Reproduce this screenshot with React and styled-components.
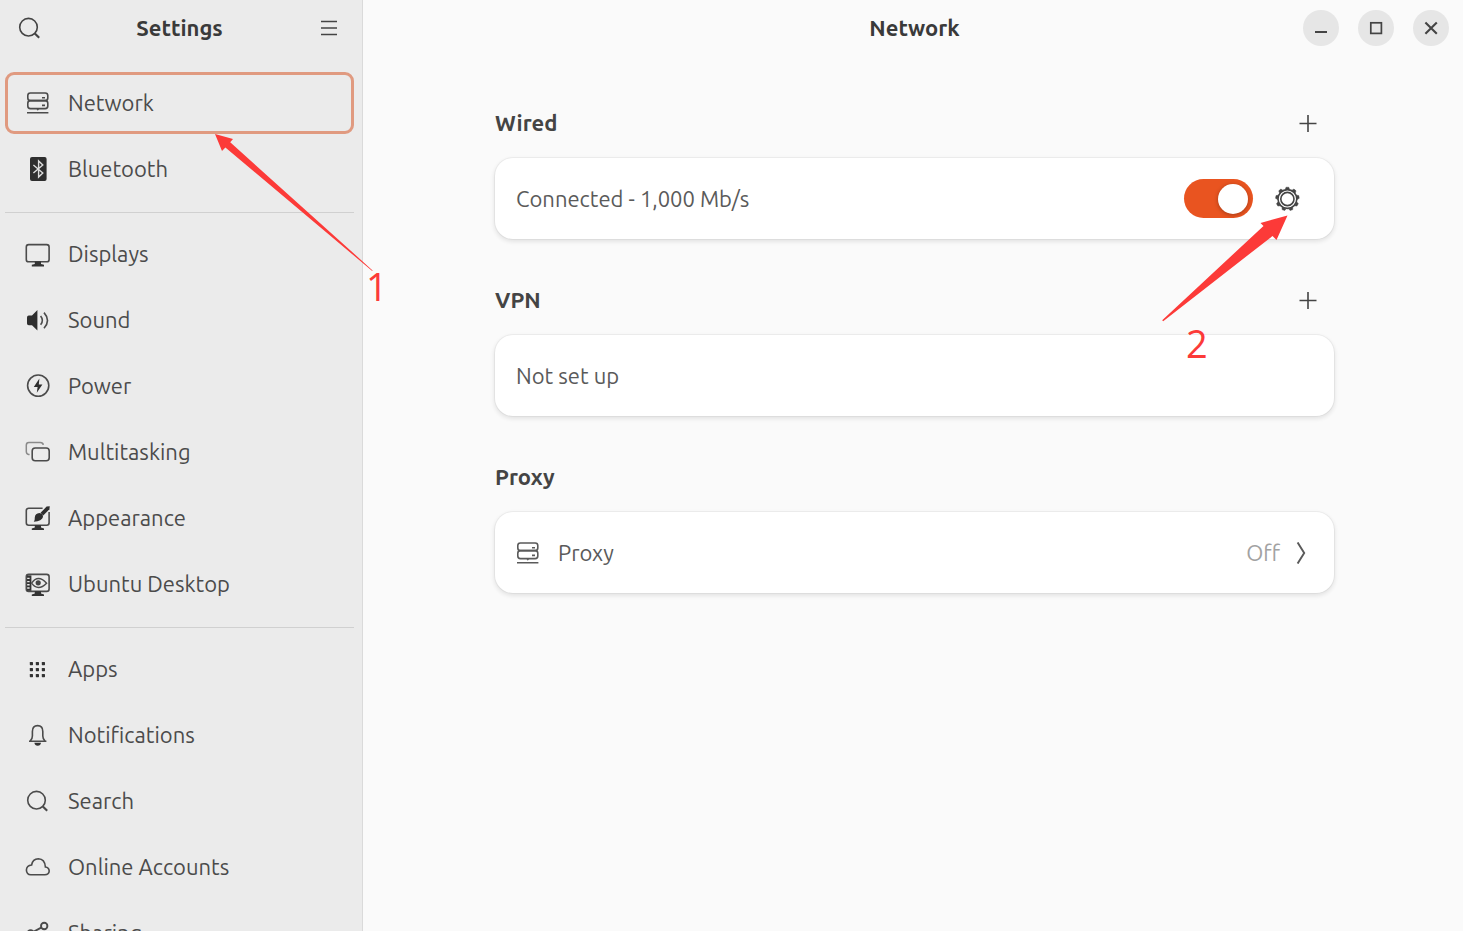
import React from "react";
import styled, { createGlobalStyle, css } from "styled-components";

const GlobalStyle = createGlobalStyle`
  *, *::before, *::after { box-sizing: border-box; }
  body {
    margin: 0;
    background: #fafafa;
    color: #4b4b4b;
    font-family: Ubuntu, "Noto Sans", sans-serif;
    font-size: 22px;
    line-height: 30px;
  }
  button, input { font: inherit; color: inherit; }
`;

const Window = styled.div`
  position: relative;
  display: flex;
  height: 100vh;
  overflow: hidden;
`;

/* ---------- sidebar ---------- */

const Sidebar = styled.aside`
  flex: none;
  width: 363px;
  padding: 0 8px 0 5px;
  background: #ebebeb;
  border-right: 1px solid #dadada;
  overflow: hidden;
`;

const SidebarHeader = styled.header`
  display: flex;
  align-items: center;
  justify-content: space-between;
  height: 55px;
  margin-bottom: 17px;
`;

const Title = styled.h1`
  margin: 0;
  color: #3a3a3a;
  font-size: 22px;
  font-weight: 700;
`;

const IconButton = styled.button`
  display: grid;
  place-items: center;
  flex: none;
  width: ${(p) => p.$size || 50}px;
  height: ${(p) => p.$size || 50}px;
  padding: 0;
  border: 0;
  border-radius: 8px;
  background: none;
  color: #444;
`;

const NavGroup = styled.ul`
  display: flex;
  flex-direction: column;
  gap: 4px;
  margin: 0;
  padding: 0;
  list-style: none;

  & + & {
    margin-top: 12px;
    padding-top: 10px;
    border-top: 1px solid #d0d0d0;
  }
`;

const NavLink = styled.a`
  display: flex;
  align-items: center;
  gap: 17px;
  height: 62px;
  padding: 0 17px;
  border: 3px solid transparent;
  border-radius: 9px;
  color: inherit;
  text-decoration: none;
  ${(p) => p.$current && css`border-color: #e09a80;`}
`;

/* ---------- main panel ---------- */

const Main = styled.main`
  flex: 1;
  min-width: 0;
  padding-left: 3px;
`;

const MainHeader = styled.header`
  display: grid;
  grid-template-columns: 1fr auto 1fr;
  align-items: center;
  height: 55px;
  padding: 0 14px;
`;

const WindowControls = styled.div`
  grid-column: 3;
  display: flex;
  justify-content: flex-end;
  gap: 19px;
`;

const RoundButton = styled.button`
  display: grid;
  place-items: center;
  width: 36px;
  height: 36px;
  padding: 0;
  border: 0;
  border-radius: 50%;
  background: #e6e6e6;
  color: #444;
`;

const PanelTitle = styled(Title)`
  grid-column: 2;
`;

const Content = styled.div`
  display: flex;
  flex-direction: column;
  gap: 44px;
  max-width: 839px;
  margin: 0 auto;
  padding-top: 51px;
`;

const SectionHeader = styled.div`
  display: flex;
  align-items: center;
  justify-content: space-between;
  height: 34px;
  margin-bottom: 18px;
  padding: 0 8px 0 0;
`;

const SectionTitle = styled.h2`
  margin: 0;
  color: #444;
  font-size: 22px;
  font-weight: 700;
`;

const Card = styled.div`
  position: relative;
  display: flex;
  align-items: center;
  height: 81px;
  padding: 0 22px 0 21px;
  border-radius: 18px;
  background: #fff;
  box-shadow: 0 0 0 1px rgba(0, 0, 0, 0.04), 0 2px 4px 1px rgba(0, 0, 0, 0.09);
  color: #5a5a5a;
`;

const RowText = styled.span`
  flex: 1;
`;

const ProxyLink = styled.a`
  display: flex;
  flex: 1;
  align-items: center;
  gap: 17px;
  margin-left: -1px;
  color: inherit;
  text-decoration: none;
`;

const RowValue = styled.span`
  margin-right: -7px;
  color: #a2a2a2;
`;

const Switch = styled.input.attrs({ type: "checkbox", role: "switch" })`
  appearance: none;
  flex: none;
  display: flex;
  align-items: center;
  width: 69px;
  height: 39px;
  margin: 0 9px 0 0;
  padding: 0 5px;
  border-radius: 20px;
  background: #c9c9c9;

  &::before {
    content: "";
    width: 30px;
    height: 30px;
    border-radius: 50%;
    background: #fff;
    box-shadow: 0 1px 4px rgba(0, 0, 0, 0.3);
  }

  &:checked {
    justify-content: flex-end;
    background: #e95420;
  }
`;

/* ---------- callouts ---------- */

const Callout = styled.div`
  position: absolute;
  z-index: 1;
  pointer-events: none;
  color: #fc3a38;
  font: 38px/44px "Open Sans", sans-serif;

  svg { display: block; }
  span { position: absolute; }
`;

const NavCallout = styled(Callout)`
  top: 133px;
  left: 214px;

  span { top: 131px; left: 152px; }
`;

const GearCallout = styled(Callout)`
  top: 57px;
  right: 45px;

  span { top: 106px; left: 25px; }
`;

/* ---------- icons ---------- */

function Glyph({ size = 26, children }) {
  return (
    <svg width={size} height={size} viewBox={`0 0 ${size} ${size}`} fill="none" stroke="currentColor" strokeWidth="1.6" aria-hidden="true">
      {children}
    </svg>
  );
}

const Stand = ({ y }) => (
  <path d={`M9.8 ${y}h6.2v2.4l3 .8v1.6H6.8v-1.6l3-.8z`} fill="#333" stroke="none" />
);

const SearchShape = () => (
  <>
    <circle cx="11.5" cy="12.2" r="8.8" />
    <path d="M17.8 18.5l4.4 4.2" strokeWidth="2.2" />
  </>
);

const icons = {
  network: (
    <>
      <rect x="2.8" y="3" width="20" height="7.6" rx="2.6" />
      <rect x="2.8" y="10.6" width="20" height="8" rx="2.6" />
      <path d="M17 7.8h3M17 15.4h3M2 22.8h21.4" />
      <path d="M11.2 18.6h3.2l-1.6 2.2z" fill="currentColor" stroke="none" />
    </>
  ),
  bluetooth: (
    <>
      <rect x="5" y="1" width="16.6" height="24" rx="2" fill="#2e2e2e" stroke="none" />
      <path d="M8.4 9l9.4 8-4.2 4V5l4.2 4-9.4 8" stroke="#dcdcdc" strokeWidth="1.4" />
    </>
  ),
  displays: (
    <>
      <rect x="1.3" y="3.6" width="22.8" height="17.2" rx="2.4" />
      <Stand y={20.6} />
    </>
  ),
  sound: (
    <>
      <path d="M2 10.4q0-1.8 1.8-1.8H7L12.4 3v20.6L7 18.2H3.8Q2 18.2 2 16.4z" fill="#2e2e2e" stroke="none" />
      <path d="M15.6 9q3.6 4.4 0 8.8" />
      <path d="M19 5.6q7 7.8 0 15.6" />
    </>
  ),
  power: (
    <>
      <circle cx="13.2" cy="12.6" r="10.6" />
      <path d="M14.4 5.6L8.8 14h3.8l-.8 5.8 5.6-8.4h-3.6z" fill="#2e2e2e" stroke="none" />
    </>
  ),
  multitasking: (
    <>
      <path d="M4.6 15.4H3.6Q1.3 15 1.3 12.6V6.2q0-2.6 2.6-2.6h11.4q2.6 0 3 2.2" stroke="#8a8a8a" strokeWidth="1.5" />
      <rect x="7.2" y="9" width="17" height="12.8" rx="3" />
    </>
  ),
  appearance: (
    <>
      <path d="M17.6 3.2H3.7q-2.4 0-2.4 2.4v12.2q0 2.4 2.4 2.4h18q2.4 0 2.4-2.4V7" />
      <path d="M24.8 1.2L21.6 1.6l-6 6.2 2.6 2.6 6.2-6.2z" fill="#2e2e2e" stroke="none" />
      <path d="M14.4 8q3.8.4 3.6 4-1 4.2-9.2 4.8 1.2-1.8 1-4.6.4-3.8 4.6-4.2z" fill="#2e2e2e" stroke="none" />
      <Stand y={20.2} />
    </>
  ),
  desktop: (
    <>
      <rect x="1.3" y="3.4" width="22.8" height="17" rx="2.4" />
      <path d="M2 4.4h4.4v15.4H2z" fill="#333" stroke="none" />
      <path d="M2.2 7.4h2.4M2.2 10.6h2.4M2.2 13.8h2.4M2.2 17h2.4" stroke="#ebebeb" strokeWidth="1.4" />
      <path d="M6.6 12.2q6.4-9.4 15 0-8.6 8.6-15 0z" strokeWidth="1.4" />
      <circle cx="13.2" cy="11.8" r="2.6" fill="#444" stroke="none" />
      <Stand y={20.2} />
    </>
  ),
  apps: (
    <g fill="#333" stroke="none">
      {[6, 12, 18].map((y) =>
        [4.8, 10.8, 16.8].map((x) => <rect key={`${x}-${y}`} x={x} y={y} width="3.2" height="3.2" rx=".6" />)
      )}
    </g>
  ),
  notifications: (
    <>
      <path d="M4 19.2h17.4M5.2 19q2.2-2 2.2-5V9.4q0-5.8 5.2-5.8t5.2 5.8V14q0 3 2.2 5" />
      <path d="M9.4 20.8h6.6q-.4 3-3.3 3t-3.3-3z" fill="#333" stroke="none" />
    </>
  ),
  search: <SearchShape />,
  accounts: (
    <path d="M5.8 20.8h14q4.2-.2 4.4-3.8-.2-3.6-3.8-4-.6-8-7-8.2-5.8.2-6.8 6.2-5 .6-5.2 5 .2 4.6 4.4 4.8z" />
  ),
  sharing: (
    <>
      <circle cx="19.2" cy="6" r="3.2" strokeWidth="1.9" />
      <circle cx="5.6" cy="13.4" r="3.2" strokeWidth="1.9" />
      <circle cx="19.2" cy="20.6" r="3.2" strokeWidth="1.9" />
      <path d="M8.4 11.8l7.8-4.2M8.4 15l7.8 4" strokeWidth="1.9" />
    </>
  ),
};

function Gear() {
  const teeth = Array.from({ length: 9 }, (_, i) => i * 40);
  return (
    <Glyph>
      <circle cx="13.4" cy="13" r="9.4" strokeWidth="1.6" />
      <circle cx="13.4" cy="13" r="6.6" strokeWidth="1.6" />
      {teeth.map((a) => (
        <path key={a} d="M11.2 3.4L12 1.2h2.8l.8 2.2z" fill="currentColor" strokeWidth=".4" transform={`rotate(${a} 13.4 13)`} />
      ))}
    </Glyph>
  );
}

const Plus = () => (
  <Glyph size={18}>
    <path d="M9 1v17M.5 9.5h17" />
  </Glyph>
);

const groups = [
  [["network", "Network"], ["bluetooth", "Bluetooth"]],
  [
    ["displays", "Displays"],
    ["sound", "Sound"],
    ["power", "Power"],
    ["multitasking", "Multitasking"],
    ["appearance", "Appearance"],
    ["desktop", "Ubuntu Desktop"],
  ],
  [
    ["apps", "Apps"],
    ["notifications", "Notifications"],
    ["search", "Search"],
    ["accounts", "Online Accounts"],
    ["sharing", "Sharing"],
  ],
];

export default function App() {
  return (
    <>
      <GlobalStyle />
      <Window>
        <Sidebar>
          <SidebarHeader>
            <IconButton aria-label="Search settings">
              <Glyph><SearchShape /></Glyph>
            </IconButton>
            <Title>Settings</Title>
            <IconButton aria-label="Main menu">
              <Glyph size={16}><path d="M0 1.5h16M0 8h16M0 14.5h16" /></Glyph>
            </IconButton>
          </SidebarHeader>
          <nav aria-label="Settings">
            {groups.map((items) => (
              <NavGroup key={items[0][0]}>
                {items.map(([id, label]) => (
                  <li key={id}>
                    <NavLink href={`#${id}`} $current={id === "network"} aria-current={id === "network" ? "page" : undefined}>
                      <Glyph>{icons[id]}</Glyph>
                      <span>{label}</span>
                    </NavLink>
                  </li>
                ))}
              </NavGroup>
            ))}
          </nav>
        </Sidebar>

        <Main>
          <MainHeader>
            <PanelTitle as="h2">Network</PanelTitle>
            <WindowControls>
              <RoundButton aria-label="Minimize">
                <Glyph size={14}><path d="M1 11h12" strokeWidth="2" /></Glyph>
              </RoundButton>
              <RoundButton aria-label="Maximize">
                <Glyph size={14}><rect x="1.8" y="1.8" width="10.6" height="10.6" strokeWidth="1.7" /></Glyph>
              </RoundButton>
              <RoundButton aria-label="Close">
                <Glyph size={14}><path d="M1.4 1.4l11.4 11.4M12.8 1.4L1.4 12.8" strokeWidth="2.1" /></Glyph>
              </RoundButton>
            </WindowControls>
          </MainHeader>

          <Content>
            <section>
              <SectionHeader>
                <SectionTitle>Wired</SectionTitle>
                <IconButton $size={36} aria-label="Add wired connection"><Plus /></IconButton>
              </SectionHeader>
              <Card>
                <RowText as="label" htmlFor="wired">Connected - 1,000 Mb/s</RowText>
                <Switch id="wired" defaultChecked />
                <IconButton aria-label="Wired options"><Gear /></IconButton>
                <GearCallout>
                  <svg width="128" height="108" viewBox="0 0 128 108" fill="currentColor" aria-hidden="true">
                    <path d="M126.5 0.5L99.5 8l3 3L1.2 105.2l1 1L111.5 21l4 4z" />
                  </svg>
                  <span>2</span>
                </GearCallout>
              </Card>
            </section>

            <section>
              <SectionHeader>
                <SectionTitle>VPN</SectionTitle>
                <IconButton $size={36} aria-label="Add VPN"><Plus /></IconButton>
              </SectionHeader>
              <Card>
                <RowText>Not set up</RowText>
              </Card>
            </section>

            <section>
              <SectionHeader>
                <SectionTitle>Proxy</SectionTitle>
              </SectionHeader>
              <Card>
                <ProxyLink href="#proxy">
                  <Glyph>{icons.network}</Glyph>
                  <RowText>Proxy</RowText>
                  <RowValue>Off</RowValue>
                  <Glyph size={22}><path d="M7.6 .4l6.6 10.6L7.6 21.6" strokeWidth="1.9" /></Glyph>
                </ProxyLink>
              </Card>
            </section>
          </Content>
        </Main>

        <NavCallout>
          <svg width="160" height="139" viewBox="0 0 160 139" fill="currentColor" aria-hidden="true">
            <path d="M1 1l18 5-2.8 3.2L158.6 137.4l-.4.6L11.4 14.4 8 18z" />
          </svg>
          <span>1</span>
        </NavCallout>
      </Window>
    </>
  );
}
